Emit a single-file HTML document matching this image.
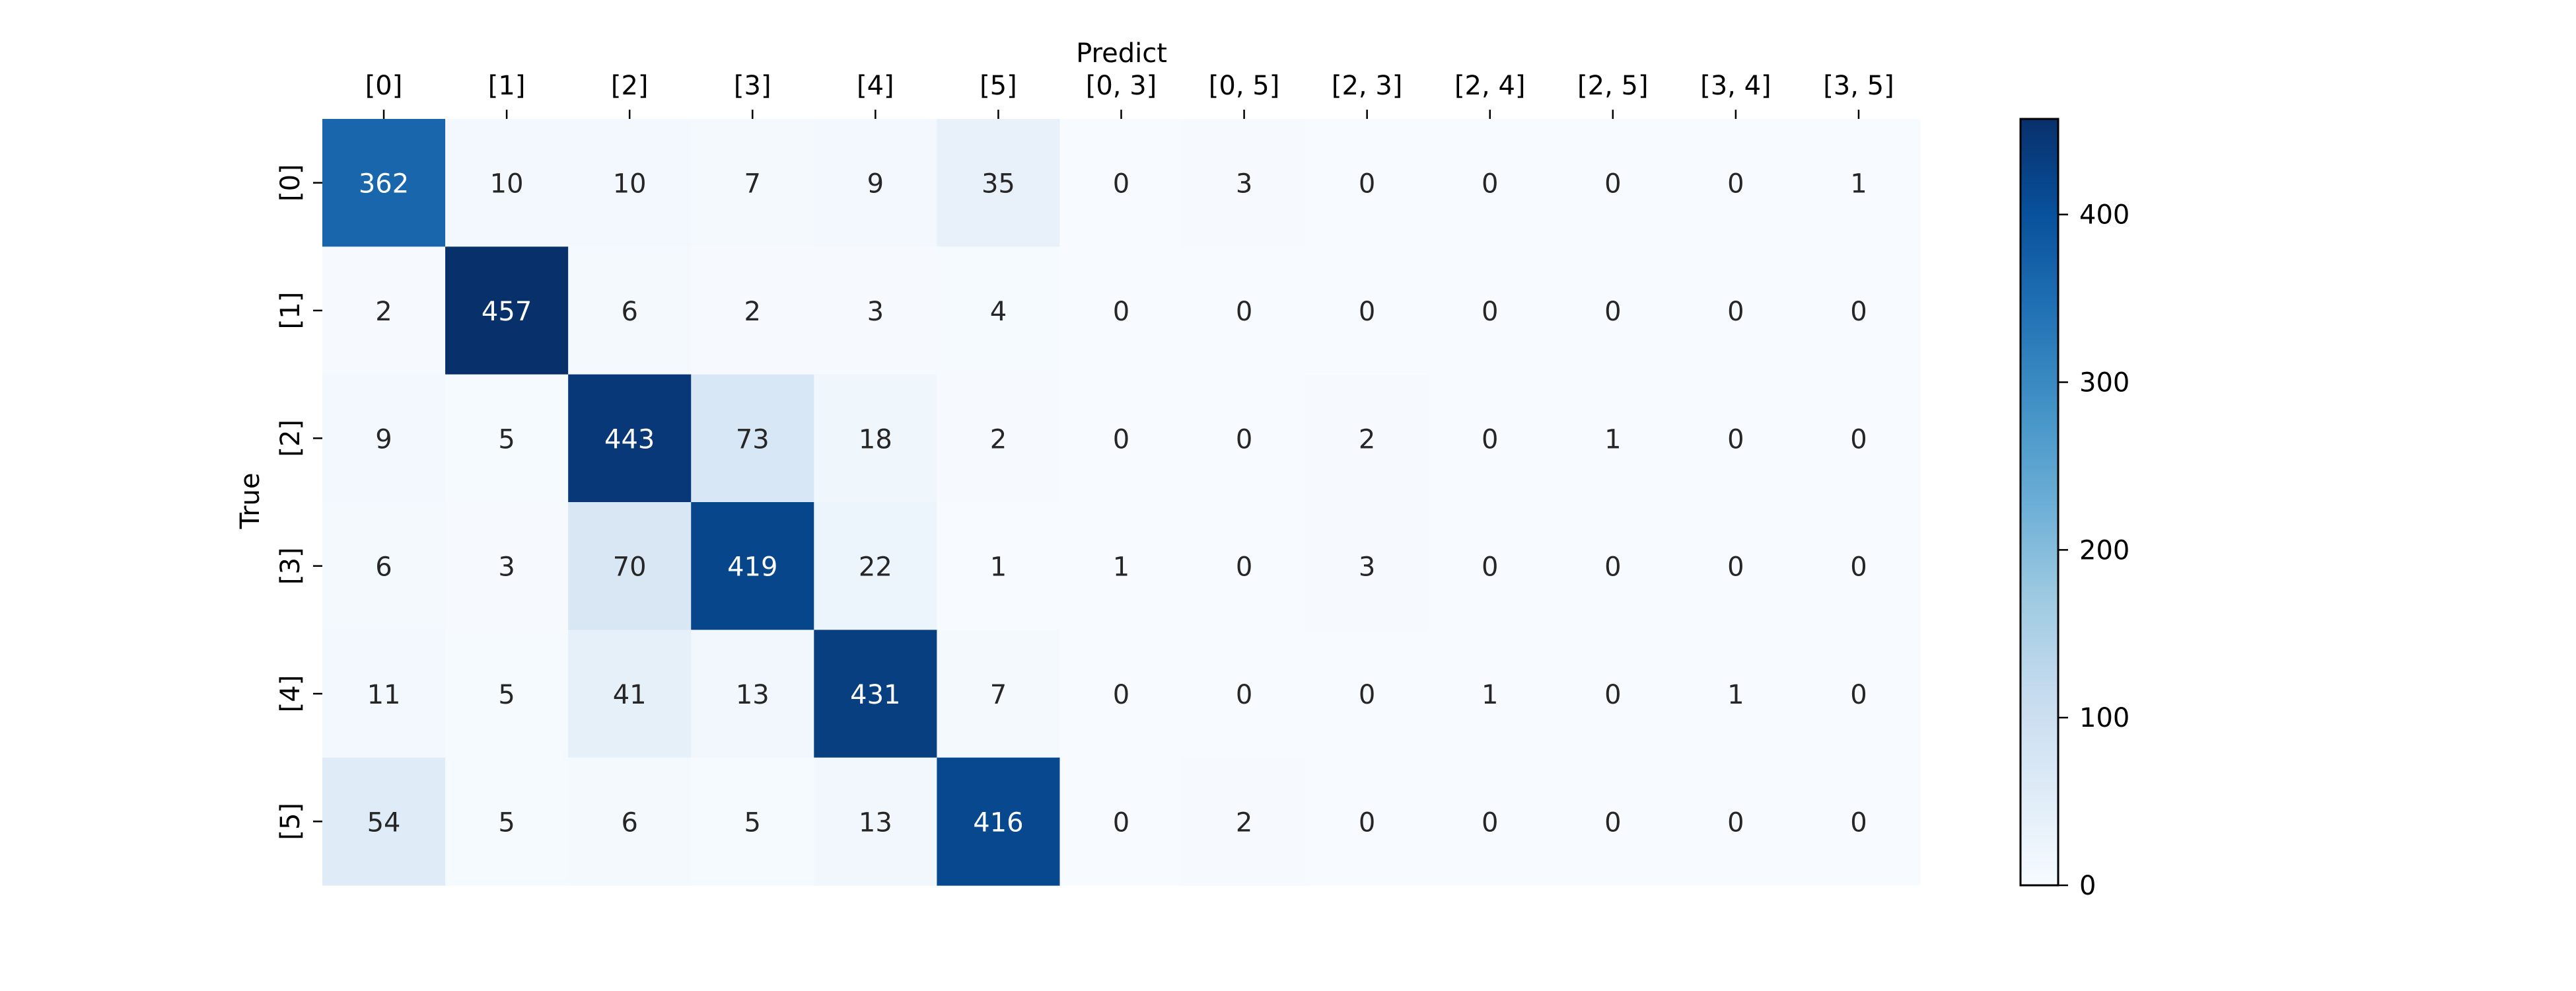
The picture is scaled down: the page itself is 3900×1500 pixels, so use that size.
<!DOCTYPE html>
<html><head><meta charset="utf-8"><style>
html,body{margin:0;padding:0;background:#fff;}
svg{display:block;}
text{font-family:"DejaVu Sans","Liberation Sans",sans-serif;font-size:40px;}
</style></head><body>
<svg id="s" width="3900" height="1500" xmlns="http://www.w3.org/2000/svg">
<defs><linearGradient id="g" x1="0" y1="1" x2="0" y2="0">
<stop offset="0" stop-color="#f7fbff"/><stop offset="0.125" stop-color="#deebf7"/><stop offset="0.25" stop-color="#c6dbef"/><stop offset="0.375" stop-color="#9ecae1"/><stop offset="0.5" stop-color="#6baed6"/><stop offset="0.625" stop-color="#4292c6"/><stop offset="0.75" stop-color="#2171b5"/><stop offset="0.875" stop-color="#08519c"/><stop offset="1" stop-color="#08306b"/>
</linearGradient></defs>
<g id="hm"></g>
<text x="1698" y="94" text-anchor="middle">Predict</text>
<text transform="translate(392,758) rotate(-90)" text-anchor="middle">True</text>
<rect x="3059" y="180" width="57" height="1160" fill="url(#g)" stroke="#000" stroke-width="3"/>
</svg>
<script>
var data=[[362,10,10,7,9,35,0,3,0,0,0,0,1],[2,457,6,2,3,4,0,0,0,0,0,0,0],[9,5,443,73,18,2,0,0,2,0,1,0,0],[6,3,70,419,22,1,1,0,3,0,0,0,0],[11,5,41,13,431,7,0,0,0,1,0,1,0],[54,5,6,5,13,416,0,2,0,0,0,0,0]];
var xl=["[0]","[1]","[2]","[3]","[4]","[5]","[0, 3]","[0, 5]","[2, 3]","[2, 4]","[2, 5]","[3, 4]","[3, 5]"];
var stops=["#f7fbff","#deebf7","#c6dbef","#9ecae1","#6baed6","#4292c6","#2171b5","#08519c","#08306b"].map(function(h){return [parseInt(h.substr(1,2),16),parseInt(h.substr(3,2),16),parseInt(h.substr(5,2),16)]});
function col(v){var t=v/457*8;var i=Math.min(7,Math.floor(t));var f=t-i;var a=stops[i],b=stops[i+1];return [0,1,2].map(function(k){return Math.round(a[k]+(b[k]-a[k])*f)});}
var L=488,T=180,W=(2907-488)/13,H=1160/6,s="";
for(var r=0;r<6;r++)for(var c=0;c<13;c++){var v=data[r][c],cc=col(v);
s+='<rect x="'+(L+c*W)+'" y="'+(T+r*H)+'" width="'+(W+0.6)+'" height="'+(H+0.6)+'" fill="rgb('+cc+')"/>';
s+='<text x="'+(L+(c+0.5)*W)+'" y="'+(T+(r+0.5)*H+15)+'" text-anchor="middle" fill="'+(v>250?'#ffffff':'#262626')+'">'+v+'</text>';}
for(var c=0;c<13;c++){var x=L+(c+0.5)*W;s+='<line x1="'+x+'" y1="166" x2="'+x+'" y2="180" stroke="#000" stroke-width="2.5"/><text x="'+x+'" y="143" text-anchor="middle">'+xl[c]+'</text>';}
for(var r=0;r<6;r++){var y=T+(r+0.5)*H;s+='<line x1="474" y1="'+y+'" x2="488" y2="'+y+'" stroke="#000" stroke-width="2.5"/><text transform="translate(453,'+y+') rotate(-90)" text-anchor="middle">['+r+']</text>';}
[0,100,200,300,400].forEach(function(v){var y=1340-v/457*1160;s+='<line x1="3117" y1="'+y+'" x2="3131" y2="'+y+'" stroke="#000" stroke-width="2.5"/><text x="3148" y="'+(y+14)+'">'+v+'</text>';});
document.getElementById("hm").innerHTML=s;
</script>
</body></html>
